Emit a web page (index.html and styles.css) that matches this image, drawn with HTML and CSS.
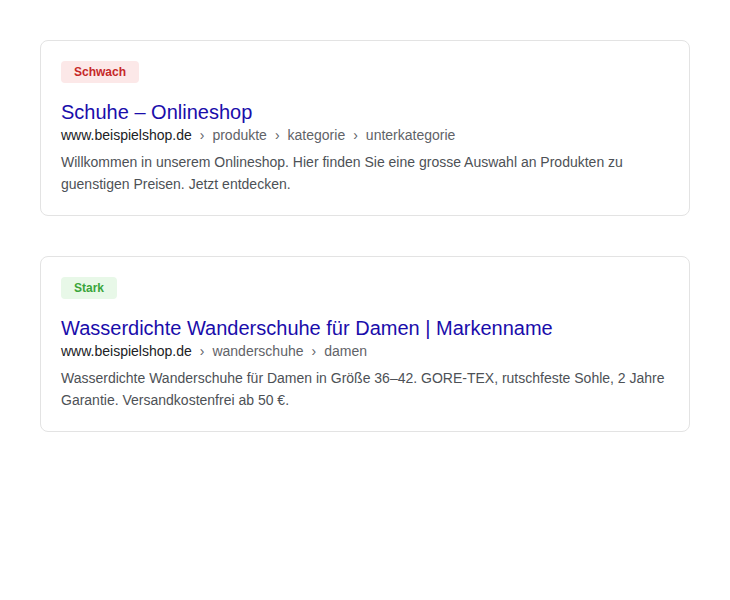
FILE: index.html
```html
<!DOCTYPE html>
<html lang="de">
<head>
<meta charset="utf-8">
<link rel="stylesheet" href="styles.css">
</head>
<body>
<div class="page">
  <div class="card">
    <span class="badge badge-weak">Schwach</span>
    <div class="title">Schuhe – Onlineshop</div>
    <div class="url"><span class="domain">www.beispielshop.de</span><span class="sep">›</span>produkte<span class="sep">›</span>kategorie<span class="sep">›</span>unterkategorie</div>
    <p class="desc">Willkommen in unserem Onlineshop. Hier finden Sie eine grosse Auswahl an Produkten zu guenstigen Preisen. Jetzt entdecken.</p>
  </div>
  <div class="card">
    <span class="badge badge-strong">Stark</span>
    <div class="title">Wasserdichte Wanderschuhe für Damen | Markenname</div>
    <div class="url"><span class="domain">www.beispielshop.de</span><span class="sep">›</span>wanderschuhe<span class="sep">›</span>damen</div>
    <p class="desc">Wasserdichte Wanderschuhe für Damen in Größe 36–42. GORE-TEX, rutschfeste Sohle, 2 Jahre Garantie. Versandkostenfrei ab 50 €.</p>
  </div>
</div>
</body>
</html>
```

FILE: styles.css
```css
html, body {
  margin: 0;
  padding: 0;
  background: #ffffff;
  font-family: "Liberation Sans", Arial, sans-serif;
}
.page {
  padding: 40px;
  display: flex;
  flex-direction: column;
  gap: 40px;
}
.card {
  border: 1px solid #e3e3e3;
  border-radius: 8px;
  padding: 20px;
  display: flex;
  flex-direction: column;
  align-items: flex-start;
}
.badge {
  font-size: 12px;
  font-weight: bold;
  line-height: 14px;
  padding: 4px 13px;
  border-radius: 4px;
  margin-bottom: 16px;
}
.badge-weak {
  background: #fce8e8;
  color: #c62828;
}
.badge-strong {
  background: #e8f8e8;
  color: #3aa53a;
}
.title {
  font-size: 20px;
  line-height: 26px;
  color: #1a0dab;
}
.url {
  font-size: 14px;
  line-height: 21px;
  color: #5f6368;
}
.domain {
  color: #202124;
}
.sep {
  margin: 0 8px;
}
.desc {
  margin: 5px 0 0;
  font-size: 14px;
  line-height: 22px;
  color: #4d5156;
}
```
